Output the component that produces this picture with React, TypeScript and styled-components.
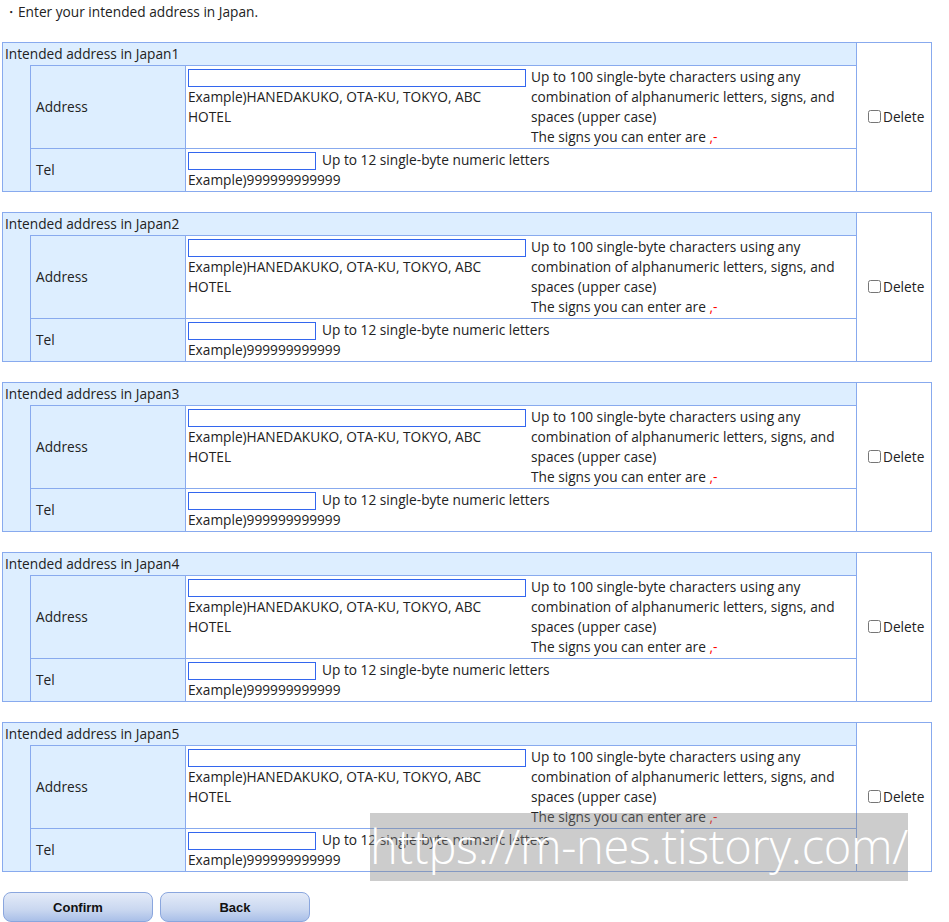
import styled, { createGlobalStyle } from 'styled-components';

const GlobalStyle = createGlobalStyle`
  body {
    margin: 0;
    padding: 0 2px;
    font-family: "Open Sans", "Noto Sans", sans-serif;
    font-size: 13.7px;
    color: #222;
    background: #fff;
  }
`;

const Page = styled.div`
  position: relative;
  width: 930px;
`;

const Intro = styled.p`
  margin: 0 0 20px;
  padding: 2px 2px 0;
  line-height: 20px;
`;

const AddressTable = styled.table`
  width: 930px;
  border-collapse: collapse;
  border: 1px solid #88aaee;
  margin-bottom: 20px;
  table-layout: fixed;
`;

const Col = styled.col<{ $w: number }>`
  width: ${(p) => p.$w}px;
`;

const HeadCell = styled.td`
  background: #ddeeff;
  height: 22px;
  padding: 0 2px;
  line-height: 20px;
`;

const DeleteCell = styled.td`
  border-left: 1px solid #88aaee;
  vertical-align: middle;
  padding: 0 0 0 11px;
`;

const IndentCell = styled.td`
  background: #ddeeff;
  border-right: 1px solid #88aaee;
  padding: 0;
`;

const LabelCell = styled.td`
  background: #ddeeff;
  border: 1px solid #88aaee;
  padding: 0 0 2px 5px;
  vertical-align: middle;
`;

const ContentCell = styled.td`
  border-top: 1px solid #88aaee;
  border-bottom: 1px solid #88aaee;
  padding: 1px 0 1px 2px;
  line-height: 20px;
  vertical-align: top;
`;

const AddressBox = styled.div`
  display: flex;
  gap: 3px;
`;

const InputColumn = styled.div`
  width: 340px;
  flex: none;
`;

const Example = styled.div`
  width: 325px;
`;

const TextInput = styled.input<{ $w: number }>`
  box-sizing: border-box;
  width: ${(p) => p.$w}px;
  height: 18px;
  border: 1px solid #3366ee;
  margin: 2px 0 0;
  padding: 0 2px;
  vertical-align: top;
  font: inherit;
`;

const Note = styled.div`
  width: 322px;
`;

const Red = styled.span`
  color: #ff0000;
`;

const TelNote = styled.span`
  margin-left: 6px;
`;

const CheckLabel = styled.label`
  display: inline-flex;
  align-items: center;
  gap: 2px;
`;

const Check = styled.input`
  width: 13px;
  height: 13px;
  margin: 0;
`;

const Buttons = styled.div`
  display: flex;
  gap: 7px;
  padding: 0 1px;
`;

const Button = styled.button`
  width: 150px;
  height: 30px;
  border: 1px solid #8aa6de;
  border-radius: 8px;
  background: linear-gradient(#e4ebf8, #c9d7f0 60%, #a9bfe8);
  font-family: "Liberation Sans", Arial, sans-serif;
  font-weight: bold;
  font-size: 13px;
  color: #111;
  cursor: pointer;
`;

const Watermark = styled.div`
  position: absolute;
  left: 368px;
  top: 813px;
  width: 538px;
  height: 68px;
  background: rgba(128, 128, 128, 0.4);
  color: #fff;
  font-family: "Open Sans", "Noto Sans", sans-serif;
  font-weight: 300;
  font-size: 47px;
  line-height: 66px;
  text-align: center;
  letter-spacing: -0.3px;
  white-space: nowrap;
  pointer-events: none;
`;

function AddressBlock({ n }: { n: number }) {
  return (
    <AddressTable>
      <colgroup>
        <Col $w={28} />
        <Col $w={155} />
        <Col $w={671} />
        <Col $w={75} />
      </colgroup>
      <tbody>
        <tr>
          <HeadCell colSpan={3}>Intended address in Japan{n}</HeadCell>
          <DeleteCell rowSpan={3}>
            <CheckLabel>
              <Check type="checkbox" />
              Delete
            </CheckLabel>
          </DeleteCell>
        </tr>
        <tr>
          <IndentCell rowSpan={2} />
          <LabelCell>Address</LabelCell>
          <ContentCell>
            <AddressBox>
              <InputColumn>
                <TextInput $w={338} type="text" />
                <Example>Example)HANEDAKUKO, OTA-KU, TOKYO, ABC HOTEL</Example>
              </InputColumn>
              <Note>
                Up to 100 single-byte characters using any combination of
                alphanumeric letters, signs, and spaces (upper case)
                <br />
                The signs you can enter are <Red>,-</Red>
              </Note>
            </AddressBox>
          </ContentCell>
        </tr>
        <tr>
          <LabelCell>Tel</LabelCell>
          <ContentCell>
            <TextInput $w={128} type="text" />
            <TelNote>Up to 12 single-byte numeric letters</TelNote>
            <div>Example)999999999999</div>
          </ContentCell>
        </tr>
      </tbody>
    </AddressTable>
  );
}

export default function App() {
  return (
    <>
      <GlobalStyle />
      <Page>
        <Intro>・Enter your intended address in Japan.</Intro>
        {[1, 2, 3, 4, 5].map((n) => (
          <AddressBlock key={n} n={n} />
        ))}
        <Buttons>
          <Button type="button">Confirm</Button>
          <Button type="button">Back</Button>
        </Buttons>
        <Watermark>https://m-nes.tistory.com/</Watermark>
      </Page>
    </>
  );
}
